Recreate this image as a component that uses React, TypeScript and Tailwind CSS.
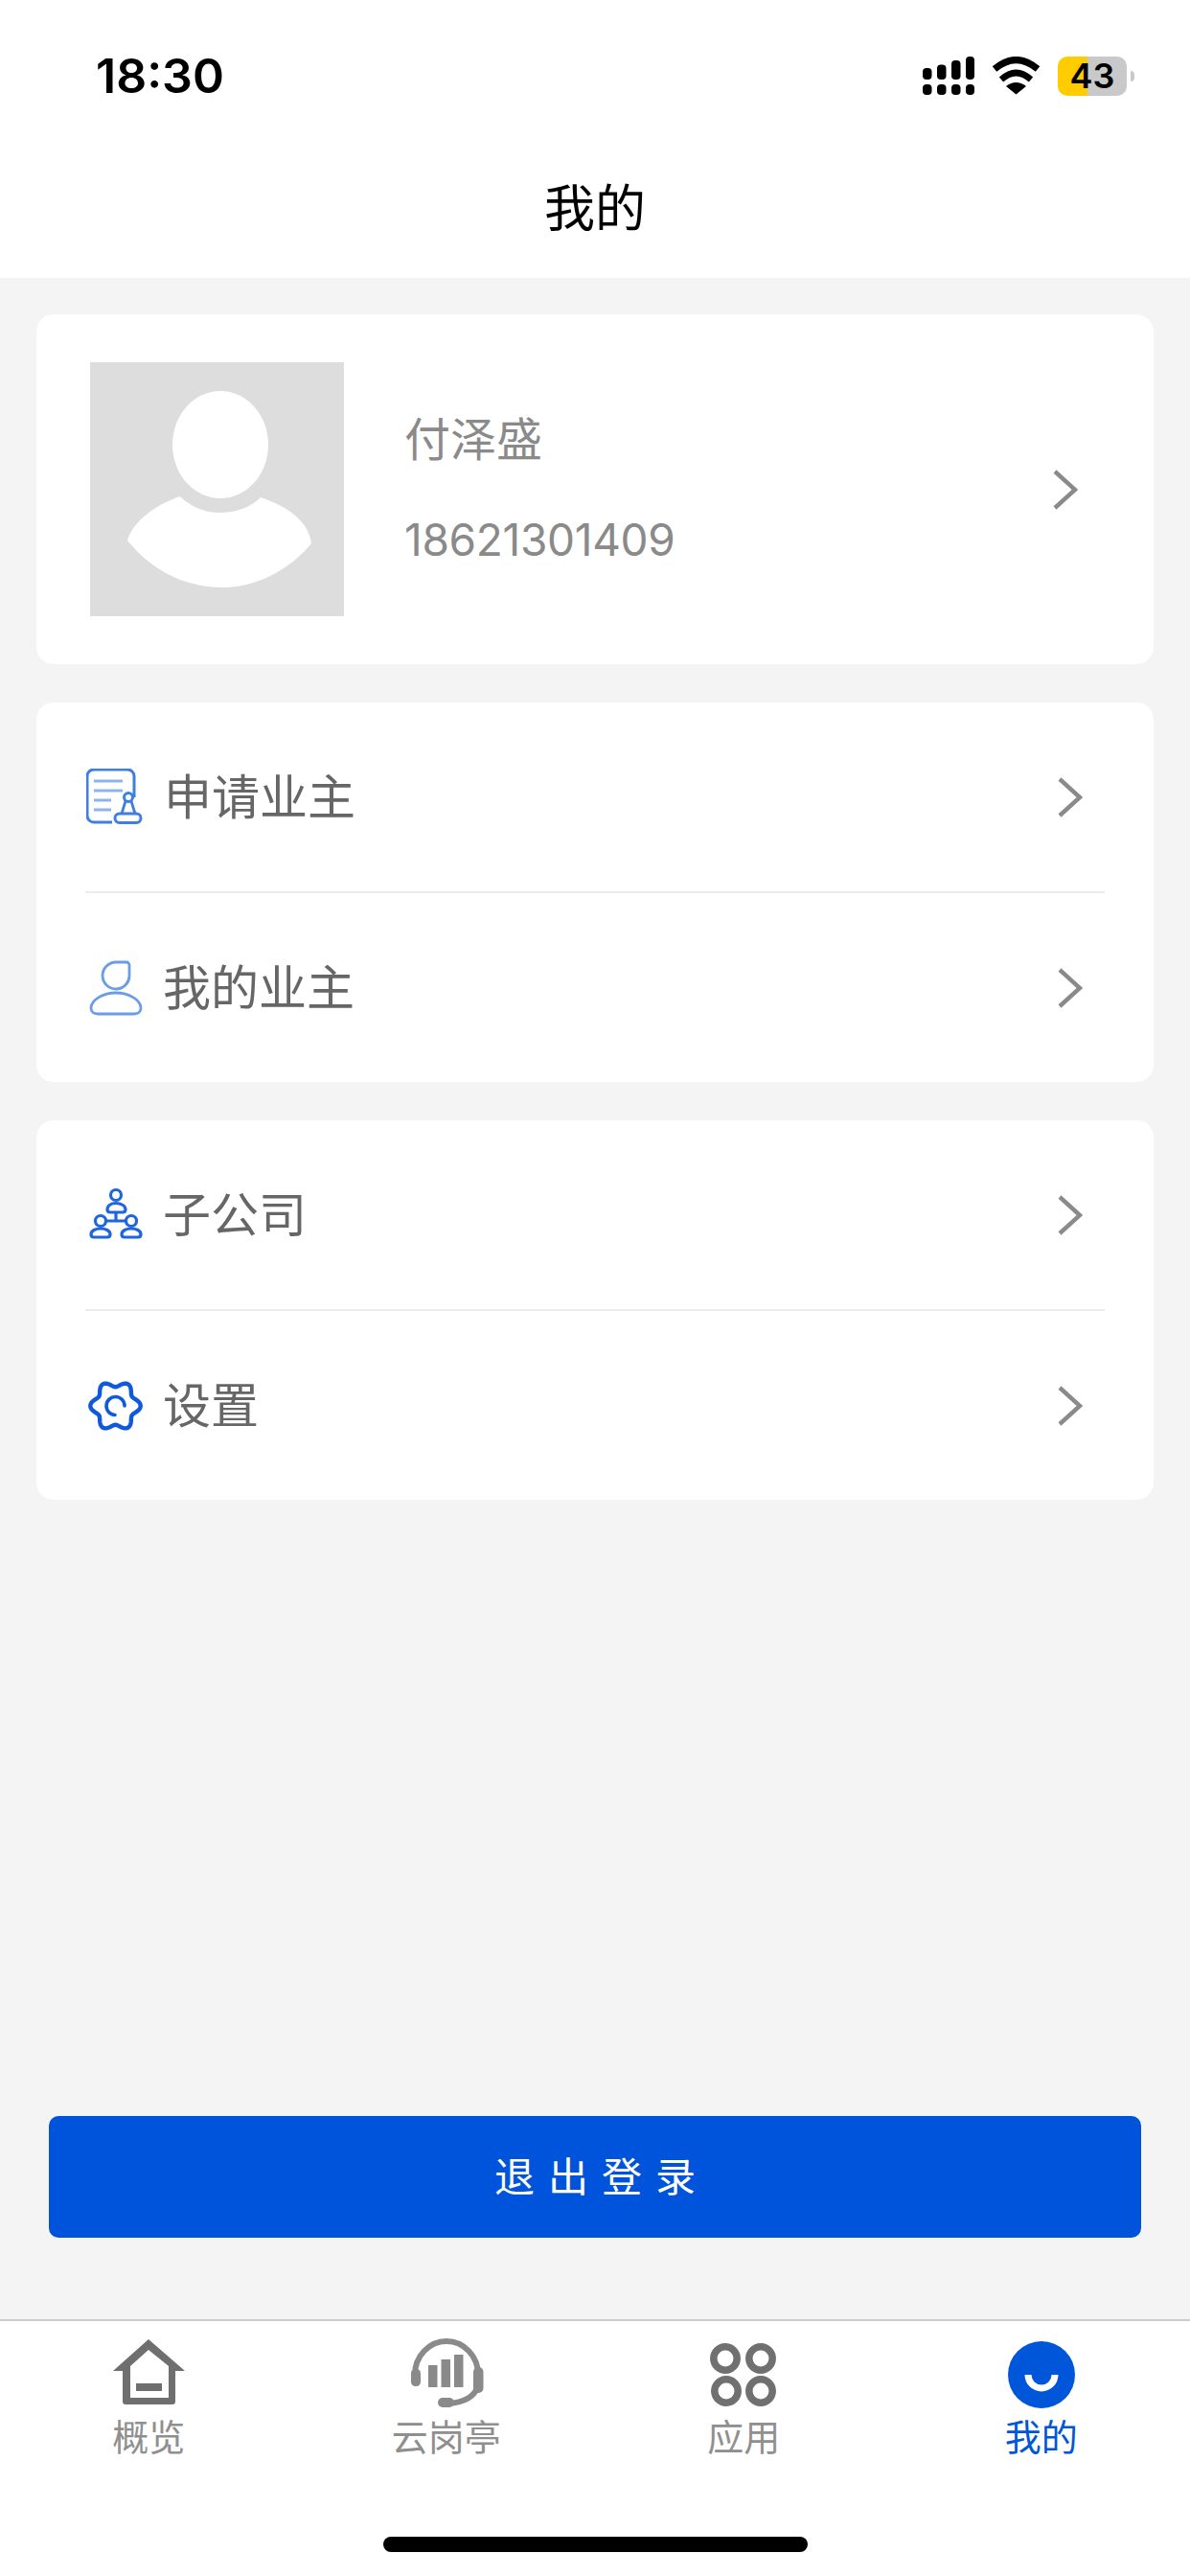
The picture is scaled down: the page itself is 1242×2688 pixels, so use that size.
import React from "react";

const gearPath =
  Array.from({ length: 121 }, (_, i) => {
    const t = (i / 120) * Math.PI * 2;
    const r = 23 + 3.2 * Math.cos(6 * t);
    const x = 30.5 + r * Math.cos(t);
    const y = 30 + r * Math.sin(t);
    return `${i === 0 ? "M" : "L"}${x.toFixed(2)} ${y.toFixed(2)}`;
  }).join(" ") + "Z";

const Chevron = () => (
  <svg width="27" height="44" viewBox="0 0 27 44" fill="none" className="shrink-0">
    <path d="M3 3L24 22L3 41" stroke="#8a8a8a" strokeWidth="4.4" />
  </svg>
);

const ApplyIcon = () => (
  <svg width="60" height="60" viewBox="0 0 60 60" fill="none">
    <path d="M50 30V8a7 7 0 0 0-7-7H8a7 7 0 0 0-7 7v41a7 7 0 0 0 7 7h19" stroke="#3f7fe2" strokeWidth="3" />
    <path d="M8 13H38M8 23H38M8 33H26M8 43H26" stroke="#8fb4ec" strokeWidth="3.2" />
    <circle cx="44" cy="30" r="4.5" stroke="#3f7fe2" strokeWidth="3" />
    <path d="M41 34L37 47M47 34L51 47" stroke="#3f7fe2" strokeWidth="2.8" />
    <rect x="30" y="47" width="27" height="9.5" rx="4.7" stroke="#3f7fe2" strokeWidth="3" />
  </svg>
);

const OwnerIcon = () => (
  <svg width="60" height="60" viewBox="0 0 60 60" fill="none" stroke="#6a9ce8" strokeWidth="2.8">
    <path d="M31 3H42a3 3 0 0 1 3 3V16A14 14 0 1 1 31 3Z" />
    <path d="M5 51C5 42 18 35 31 35C44 35 57 42 57 51C57 55 54 57 50 57H12C8 57 5 55 5 51Z" />
  </svg>
);

const CompanyIcon = () => (
  <svg width="60" height="60" viewBox="0 0 60 60" fill="none" stroke="#1f66de" strokeWidth="3.2">
    <circle cx="31" cy="9" r="5.5" />
    <path d="M22 24C22 20 26 17.5 31 17.5C36 17.5 41 20 41 24C41 26 40 27 38 27H25C23 27 22 26 22 24Z" />
    <path d="M31 27V36M20 36H42" />
    <circle cx="15" cy="36" r="5.5" />
    <circle cx="47" cy="36" r="5.5" />
    <path d="M5 50C5 46 10 44 15 44C20 44 25 46 25 50C25 52 24 53 22 53H8C6 53 5 52 5 50Z" />
    <path d="M37 50C37 46 42 44 47 44C52 44 57 46 57 50C57 52 56 53 54 53H40C38 53 37 52 37 50Z" />
  </svg>
);

const SettingsIcon = () => (
  <svg width="60" height="60" viewBox="0 0 60 60" fill="none" stroke="#0f5adb" strokeWidth="4.4">
    <path d={gearPath} strokeLinejoin="round" />
    <path d="M30 39.5A9.5 9.5 0 1 1 40 30" strokeLinecap="round" strokeWidth="3.6" />
  </svg>
);

const HomeIcon = () => (
  <svg width="80" height="80" viewBox="0 0 80 80" fill="#6f6f6f">
    <path
      fillRule="evenodd"
      d="M40 5L78 38H68V70a3 3 0 0 1-3 3H16a3 3 0 0 1-3-3V38H3ZM40 16L21 33V66H61V33Z"
    />
    <rect x="27" y="51" width="27" height="8" />
  </svg>
);

const HeadsetIcon = () => (
  <svg width="80" height="80" viewBox="0 0 80 80" fill="#8a8a8a">
    <path d="M7 42A33 35 0 0 1 73 42" fill="none" stroke="#8a8a8a" strokeWidth="6" />
    <rect x="3" y="36" width="10" height="18" rx="4.5" />
    <rect x="68" y="34" width="10.5" height="27" rx="5" />
    <path d="M73 54C69 65 58 71 42 72" fill="none" stroke="#8a8a8a" strokeWidth="6" />
    <rect x="31" y="66" width="17" height="10" rx="5" />
    <rect x="21" y="32" width="9.5" height="23" />
    <rect x="34.5" y="26" width="9.5" height="29" />
    <rect x="48" y="21" width="9.5" height="34" />
  </svg>
);

const AppsIcon = () => (
  <svg width="80" height="80" viewBox="0 0 80 80" fill="none" stroke="#707070" strokeWidth="7.5">
    <circle cx="21" cy="25" r="12.2" />
    <circle cx="58" cy="25" r="12.2" />
    <circle cx="22" cy="59" r="12.2" />
    <circle cx="58" cy="59" r="12.2" />
  </svg>
);

const MeIcon = () => (
  <svg width="80" height="80" viewBox="0 0 80 80" fill="none">
    <circle cx="40" cy="42" r="35" fill="#0056d9" />
    <path d="M26 42A14 14 0 0 0 54 42" stroke="#fff" strokeWidth="7" />
  </svg>
);

const rows = [
  [
    { icon: <ApplyIcon />, label: "申请业主", gap: "ml-[21px]" },
    { icon: <OwnerIcon />, label: "我的业主", gap: "ml-5" },
  ],
  [
    { icon: <CompanyIcon />, label: "子公司", gap: "ml-5" },
    { icon: <SettingsIcon />, label: "设置", gap: "ml-5" },
  ],
];

const tabs = [
  { icon: <HomeIcon />, label: "概览", active: false },
  { icon: <HeadsetIcon />, label: "云岗亭", active: false },
  { icon: <AppsIcon />, label: "应用", active: false },
  { icon: <MeIcon />, label: "我的", active: true },
];

const App: React.FC = () => {
  return (
    <div className="flex h-[2688px] flex-col overflow-hidden bg-[#f4f4f4] font-['Inter','Noto_Sans_CJK_SC',sans-serif]">
      <header className="h-[290px] shrink-0 bg-white">
        {/* status bar */}
        <div className="flex h-[158px] items-center justify-between pl-[100px] pr-[58px]">
          <span className="text-[50px] font-semibold leading-none text-black">18:30</span>
          <div className="flex items-center gap-[18px]">
            <svg width="54" height="40" viewBox="0 0 54 40" fill="#000">
              <rect x="0" y="12" width="9.5" height="12" rx="4" />
              <rect x="15" y="8.5" width="9.5" height="15.5" rx="4" />
              <rect x="30" y="4" width="9.5" height="20" rx="4" />
              <rect x="45" y="0" width="9" height="24" rx="4" />
              <rect x="0" y="29" width="9.5" height="11" rx="4" />
              <rect x="15" y="29" width="9.5" height="11" rx="4" />
              <rect x="30" y="29" width="9.5" height="11" rx="4" />
              <rect x="45" y="29" width="9" height="11" rx="4" />
            </svg>
            <svg width="51" height="40" viewBox="0 0 51 40" fill="none" stroke="#000">
              <path d="M3 13Q25.5-6 48 13" strokeWidth="7" />
              <path d="M10 24Q25.5 10 41 24" strokeWidth="6.5" />
              <path d="M15 31Q25.5 23 36 31L25.5 39.5Z" fill="#000" stroke="none" />
            </svg>
            <div className="flex items-center">
              <div className="flex h-[41px] w-[72px] items-center justify-center rounded-[10px] bg-[linear-gradient(90deg,#ffcc00_31px,#c9c9c9_31px)] text-[36px] font-semibold leading-none text-black">
                43
              </div>
              <div className="ml-1 h-[11px] w-1 rounded-r-full bg-[#c9c9c9]" />
            </div>
          </div>
        </div>
        <div className="flex h-[120px] items-center justify-center text-[53px] leading-none text-black">我的</div>
      </header>

      <main className="flex flex-1 flex-col px-[38px] pt-[38px]">
        {/* profile card */}
        <section className="flex h-[365px] items-center rounded-[18px] bg-white pl-[56px] pr-[79px]">
          <div className="h-[265px] w-[265px] shrink-0 bg-[#dddddd]">
            <svg width="265" height="265" viewBox="0 0 265 265" fill="#fff">
              <ellipse cx="136" cy="86" rx="50" ry="56" />
              <path d="M39 186C45 165 70 148 94 140C105 151 120 157 136 157C152 157 167 152 178 141C205 150 228 165 231 189C210 215 175 235 139 235C100 235 65 218 39 186Z" />
            </svg>
          </div>
          <div className="ml-[63px] flex flex-col gap-11 text-[#8a8a8a]">
            <div className="text-[48px] leading-[60px]">付泽盛</div>
            <div className="text-[46px] leading-[60px] tracking-[-0.3px]">18621301409</div>
          </div>
          <div className="ml-auto">
            <Chevron />
          </div>
        </section>

        {rows.map((group, i) => (
          <section key={i} className="mt-10 rounded-[18px] bg-white">
            {group.map((row, j) => (
              <React.Fragment key={row.label}>
                {j > 0 && <div className="mx-[51px] h-0.5 bg-[#ececec]" />}
                <div className="flex h-[197px] items-center pl-[52px] pr-[74px]">
                  <div className="h-[60px] w-[60px] shrink-0">{row.icon}</div>
                  <span className={`${row.gap} text-[50px] leading-none text-[#666666]`}>{row.label}</span>
                  <div className="ml-auto">
                    <Chevron />
                  </div>
                </div>
              </React.Fragment>
            ))}
          </section>
        ))}

        <button className="mx-[13px] mb-[85px] mt-auto flex h-[127px] items-center justify-center rounded-[10px] bg-[#0054db] pl-[14px] text-[42px] leading-none tracking-[14px] text-white">
          退出登录
        </button>
      </main>

      <footer className="flex h-[268px] shrink-0 flex-col border-t-2 border-[#cccccc] bg-white">
        <nav className="grid grid-cols-4 pt-[14px]">
          {tabs.map((tab) => (
            <div key={tab.label} className="flex flex-col items-center">
              <div className="h-20 w-20">{tab.icon}</div>
              <span className={`mt-[7px] text-[38px] leading-10 ${tab.active ? "text-[#0056d9]" : "text-[#8f8f8f]"}`}>
                {tab.label}
              </span>
            </div>
          ))}
        </nav>
        <div className="mx-auto mt-[84px] h-4 w-[443px] rounded-full bg-black" />
      </footer>
    </div>
  );
};

export default App;
